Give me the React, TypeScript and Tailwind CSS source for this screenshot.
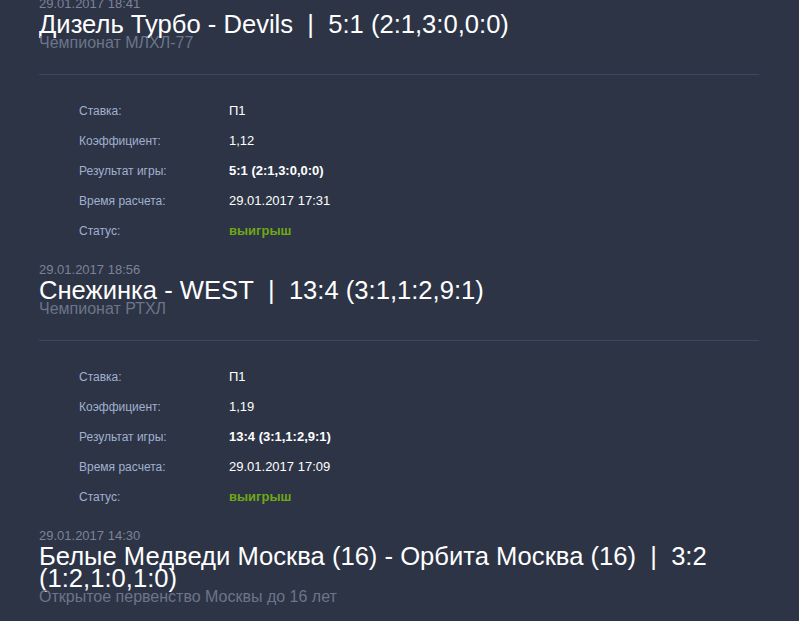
type Bet = {
  date: string;
  title: string;
  score: string;
  league: string;
  rows?: { label: string; value: string; kind?: "bold" | "win" }[];
};

const bets: Bet[] = [
  {
    date: "29.01.2017 18:41",
    title: "Дизель Турбо - Devils",
    score: "5:1 (2:1,3:0,0:0)",
    league: "Чемпионат МЛХЛ-77",
    rows: [
      { label: "Ставка:", value: "П1" },
      { label: "Коэффициент:", value: "1,12" },
      { label: "Результат игры:", value: "5:1 (2:1,3:0,0:0)", kind: "bold" },
      { label: "Время расчета:", value: "29.01.2017 17:31" },
      { label: "Статус:", value: "выигрыш", kind: "win" },
    ],
  },
  {
    date: "29.01.2017 18:56",
    title: "Снежинка - WEST",
    score: "13:4 (3:1,1:2,9:1)",
    league: "Чемпионат РТХЛ",
    rows: [
      { label: "Ставка:", value: "П1" },
      { label: "Коэффициент:", value: "1,19" },
      { label: "Результат игры:", value: "13:4 (3:1,1:2,9:1)", kind: "bold" },
      { label: "Время расчета:", value: "29.01.2017 17:09" },
      { label: "Статус:", value: "выигрыш", kind: "win" },
    ],
  },
  {
    date: "29.01.2017 14:30",
    title: "Белые Медведи Москва (16) - Орбита Москва (16)",
    score: "3:2 (1:2,1:0,1:0)",
    league: "Открытое первенство Москвы до 16 лет",
  },
];

export default function App() {
  return (
    <div className="min-h-screen w-full overflow-hidden bg-[#2d3446] font-['Liberation_Sans',Arial,sans-serif]">
      <div className="-mt-[4px] pl-[39px] pr-[40px]">
        {bets.map((bet) => (
          <div key={bet.date} className="pb-[17px]">
            {/* header */}
            <div className="text-[13px] leading-[16px] text-[#7c8397]">{bet.date}</div>
            <div className="mt-px text-[25.6px] leading-[22px] text-white">
              {bet.title}
              {"\u00a0 | \u00a0"}
              {bet.score}
            </div>
            <div className="text-[16px] leading-[16px] text-[#6c7489]">{bet.league}</div>

            {bet.rows && (
              <>
                <div className="mt-[23px] h-px bg-[#3c4862]" />
                <div className="mt-5 pl-10">
                  {bet.rows.map((row) => (
                    <div key={row.label} className="flex h-[30px] items-center pt-px">
                      <div className="w-[150px] text-[12px] text-[#a0b0cf]">{row.label}</div>
                      <div
                        className={
                          row.kind === "win"
                            ? "text-[13px] font-bold text-[#6fa815]"
                            : row.kind === "bold"
                            ? "text-[13px] font-bold text-white"
                            : "text-[13px] text-white"
                        }
                      >
                        {row.value}
                      </div>
                    </div>
                  ))}
                </div>
              </>
            )}
          </div>
        ))}
      </div>
    </div>
  );
}
